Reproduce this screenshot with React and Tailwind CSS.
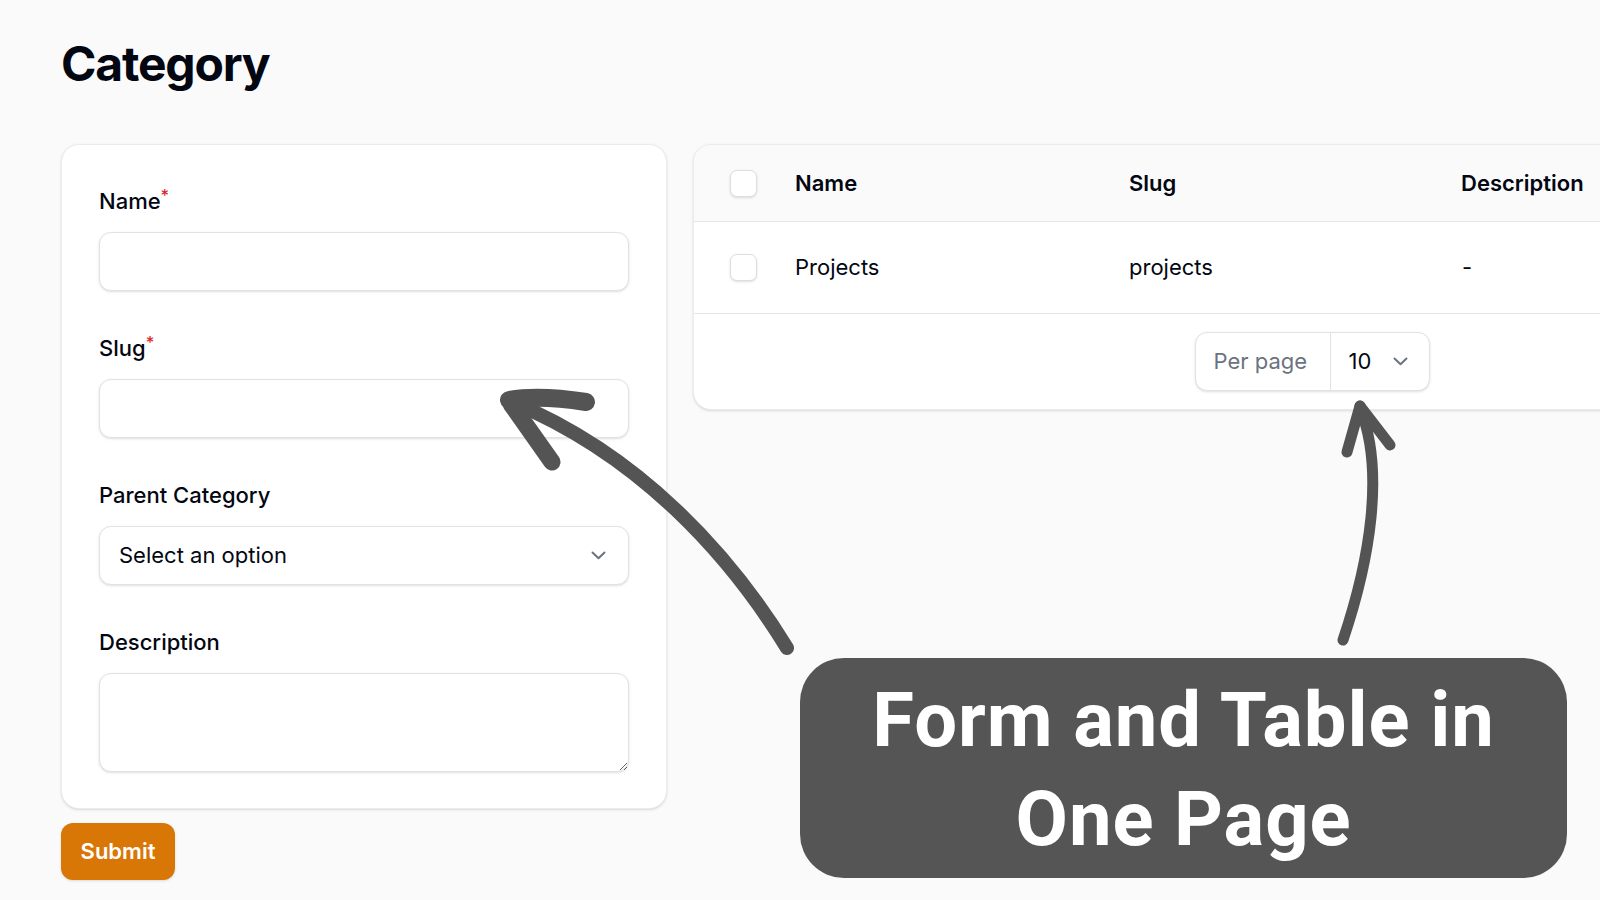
import React from 'react';

function Chevron({ className = '' }) {
  return (
    <svg width="15" height="9" viewBox="0 0 15 9" className={className} fill="none">
      <polyline points="1.5,1.5 7.5,7.2 13.5,1.5" stroke="#6b7280" strokeWidth="2" strokeLinecap="round" strokeLinejoin="round" />
    </svg>
  );
}

function Field({ label, required, children }) {
  return (
    <div className="flex flex-col gap-[16px]">
      <label className="text-[22px] font-medium leading-[30px]">
        {label}
        {required && <sup className="font-medium text-[#dc2626]">*</sup>}
      </label>
      {children}
    </div>
  );
}

function Checkbox() {
  return <div className="h-[27px] w-[27px] rounded-[7px] border border-[#dedee0] bg-white shadow-sm" />;
}

export default function App() {
  const inputCls = 'block h-[59px] w-full rounded-[12px] border border-[#e2e2e4] bg-white px-[18px] text-[22px] shadow-sm outline-none';

  return (
    <div className="relative h-[900px] w-[1600px] overflow-hidden bg-[#fafafa] pl-[61px] pt-[36px] font-['Inter',sans-serif] text-[#030712]">
      <h1 className="text-[48px] font-bold leading-[55px] tracking-tight">Category</h1>

      <div className="mt-[53px] flex items-start gap-[26px]">
        {/* form */}
        <div className="w-[606px] shrink-0">
          <div className="flex flex-col gap-[42px] rounded-[18px] border border-[#ebebeb] bg-white px-[37px] pb-[36px] pt-[41px] shadow-sm">
            <Field label="Name" required>
              <input type="text" className={inputCls} />
            </Field>
            <Field label="Slug" required>
              <input type="text" className={inputCls} />
            </Field>
            <Field label="Parent Category">
              <div className="flex h-[59px] w-full items-center justify-between rounded-[12px] border border-[#e2e2e4] bg-white pl-[19px] pr-[22px] text-[22px] shadow-sm">
                <span>Select an option</span>
                <Chevron />
              </div>
            </Field>
            <Field label="Description">
              <textarea className="block h-[99px] w-full rounded-[12px] border border-[#e2e2e4] bg-white px-[18px] py-[12px] text-[22px] shadow-sm outline-none" />
            </Field>
          </div>
          <button className="mt-[14px] flex h-[57px] w-[114px] items-center justify-center rounded-[12px] bg-[#d97706] text-[22px] font-semibold text-white shadow-sm">
            Submit
          </button>
        </div>

        {/* table */}
        <div className="w-[1238px] shrink-0 overflow-hidden rounded-[18px] border border-[#ebebeb] bg-white shadow-sm">
          <div className="flex h-[77px] items-center border-b border-[#e6e6e6] bg-[#fafafa] pl-[36px] text-[22px] font-semibold">
            <div className="w-[65px]"><Checkbox /></div>
            <div className="w-[334px]">Name</div>
            <div className="w-[332px]">Slug</div>
            <div>Description</div>
          </div>
          <div className="flex h-[92px] items-center border-b border-[#e6e6e6] pl-[36px] text-[22px]">
            <div className="w-[65px]"><Checkbox /></div>
            <div className="w-[334px]">Projects</div>
            <div className="w-[332px]">projects</div>
            <div className="pl-[1px]">-</div>
          </div>
          <div className="flex justify-center pb-[18px] pt-[18px]">
            <div className="flex h-[59px] w-[235px] rounded-[12px] border border-[#e2e2e4] bg-white text-[22px] shadow-sm">
              <div className="flex w-[134px] items-center pl-[18px] text-[#6b7280]">Per page</div>
              <div className="flex flex-1 items-center justify-between border-l border-[#e2e2e4] pl-[18px] pr-[21px]">
                <span>10</span>
                <Chevron />
              </div>
            </div>
          </div>
        </div>
      </div>

      {/* hand-drawn arrows */}
      <svg className="pointer-events-none absolute left-0 top-0" width="1600" height="900" viewBox="0 0 1600 900" fill="none">
        <g stroke="#545454" strokeLinecap="round" strokeLinejoin="round">
          <path d="M787 648 C 730 555, 640 455, 512 402" strokeWidth="14" />
          <path d="M509 400 C 532 396, 560 398, 586 402" strokeWidth="18" />
          <path d="M511 404 L 552 462" strokeWidth="17" />
          <path d="M1343 640 C 1370 560, 1385 470, 1360 408" strokeWidth="11" />
          <path d="M1360 406 L 1347 452" strokeWidth="11" />
          <path d="M1360 406 L 1390 445" strokeWidth="11" />
        </g>
      </svg>

      {/* callout */}
      <div className="absolute left-[800px] top-[658px] h-[220px] w-[767px] rounded-[44px] bg-[#555555] pt-[13px] text-center font-['Roboto',sans-serif] text-[76px] font-bold leading-[99px] tracking-[0.9px] text-white">
        Form and Table in
        <br />
        One Page
      </div>
    </div>
  );
}
